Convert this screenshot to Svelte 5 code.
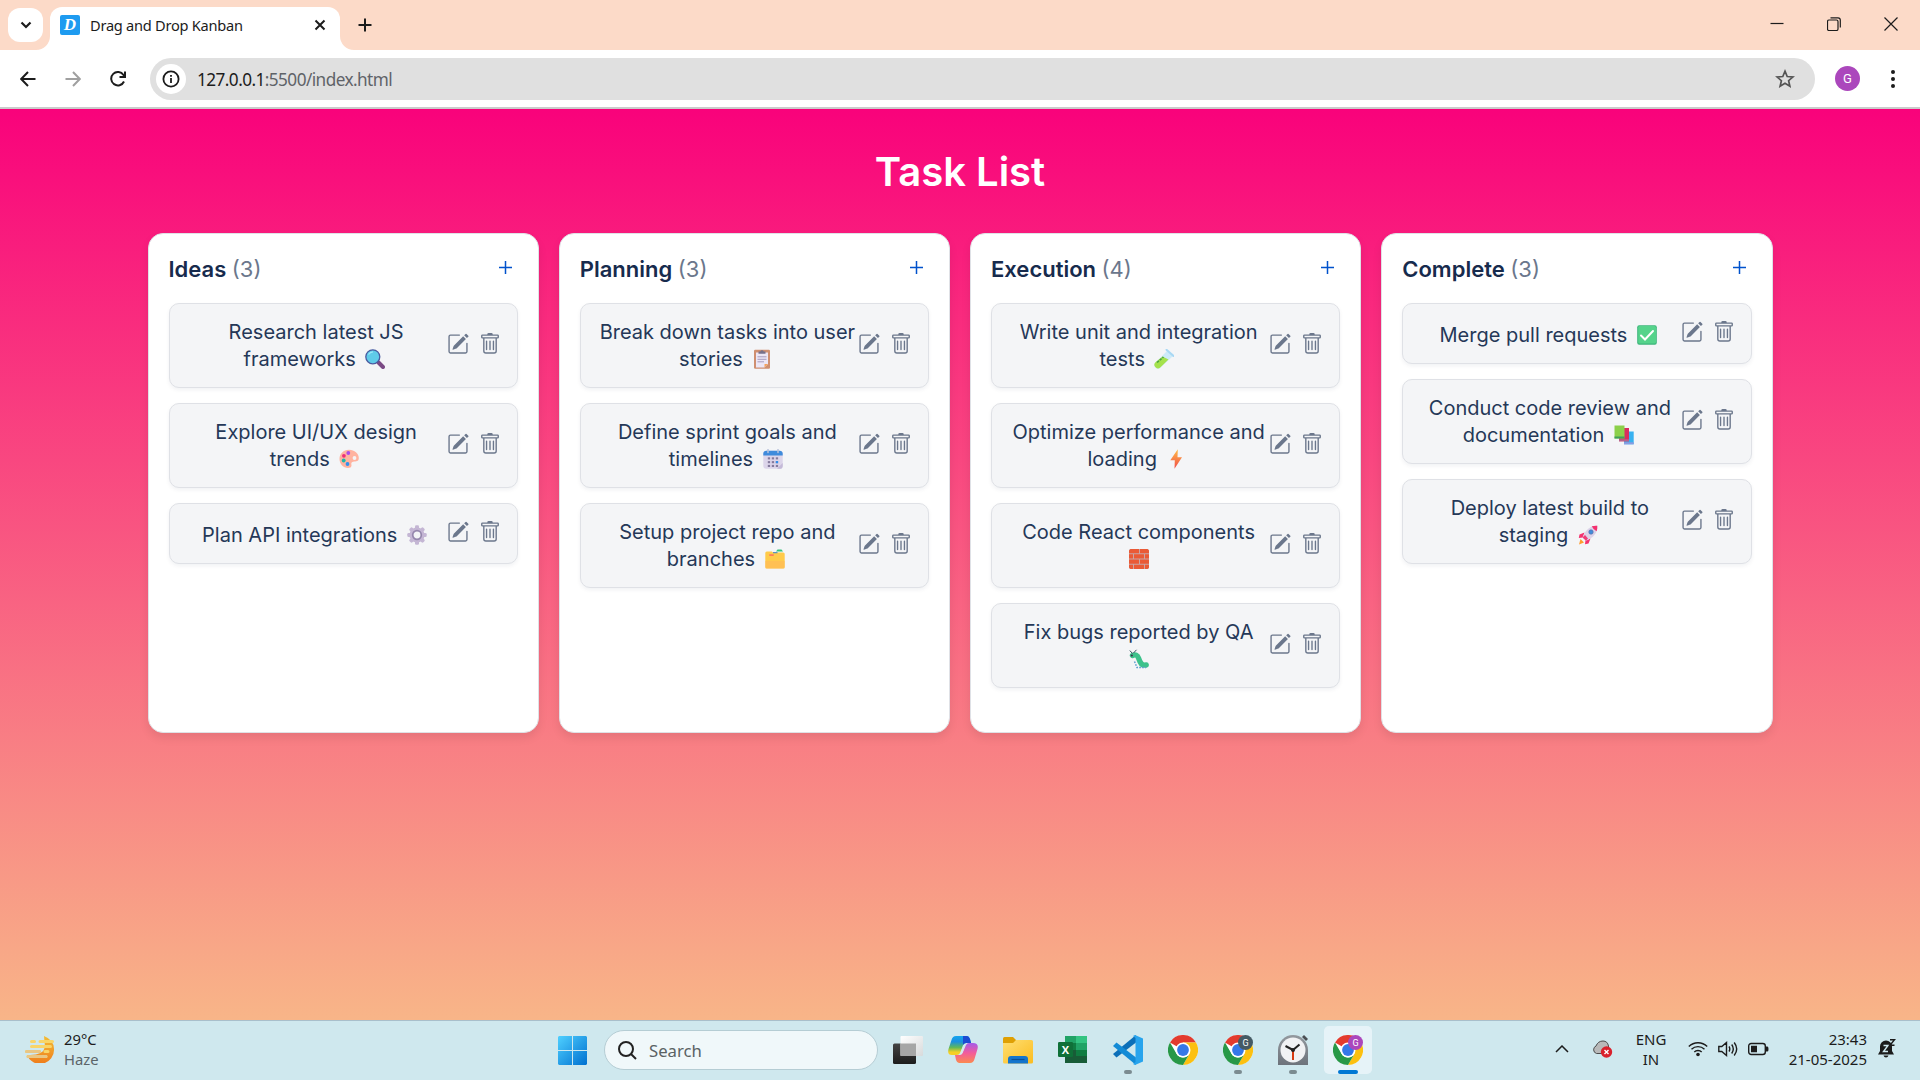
<script>
  const columns = [
    { title: 'Ideas', count: 3, tasks: [
      { lines: ['Research latest JS', 'frameworks'], icon: 'lens' },
      { lines: ['Explore UI/UX design', 'trends'], icon: 'palette' },
      { lines: ['Plan API integrations'], icon: 'gear' }
    ] },
    { title: 'Planning', count: 3, tasks: [
      { lines: ['Break down tasks into user', 'stories'], icon: 'clipboard' },
      { lines: ['Define sprint goals and', 'timelines'], icon: 'calendar' },
      { lines: ['Setup project repo and', 'branches'], icon: 'folder' }
    ] },
    { title: 'Execution', count: 4, tasks: [
      { lines: ['Write unit and integration', 'tests'], icon: 'tube' },
      { lines: ['Optimize performance and', 'loading'], icon: 'bolt' },
      { lines: ['Code React components', ''], icon: 'brick' },
      { lines: ['Fix bugs reported by QA', ''], icon: 'bug' }
    ] },
    { title: 'Complete', count: 3, tasks: [
      { lines: ['Merge pull requests'], icon: 'check' },
      { lines: ['Conduct code review and', 'documentation'], icon: 'books' },
      { lines: ['Deploy latest build to', 'staging'], icon: 'rocket' }
    ] }
  ];
  const dots = [0, 4, 8];
</script>

{#snippet emoji(name)}
  <svg class="emoji" viewBox="0 0 20 20">
    {#if name === 'lens'}
      <path d="M13.5 13.5 L18 18" stroke="#7a4a85" stroke-width="4" stroke-linecap="round" />
      <circle cx="7.8" cy="7.8" r="7" fill="#5fcbe9" stroke="#4a5aa0" stroke-width="1.3" />
      <path d="M3.5 5.5 Q5 3 8 2.8" stroke="#9be6f8" stroke-width="1.2" fill="none" />
    {:else if name === 'palette'}
      <path d="M10 .8C4.500.8.5 4.800.5 10c0 5 4 9 8.500 9 2 0 3.500-.8 3.500-2.500 0-1.500-.8-2.500.8-3.500 2-1 6.500.5 6.500-4C19.800 4.500 15.500.8 10 .8z" fill="#ffb3a0" />
      <circle cx="15.500" cy="9" r="1.900" fill="#f3f4f6" />
      <circle cx="9.300" cy="4" r="1.900" fill="#a94ce8" />
      <circle cx="4.900" cy="6.800" r="1.900" fill="#ec2f78" />
      <circle cx="4.700" cy="11.500" r="1.900" fill="#20b8a8" />
      <circle cx="8.500" cy="15" r="1.900" fill="#3390ee" />
    {:else if name === 'gear'}
      <g fill="#c4b6d4">
        {#each [0, 45, 90, 135] as a}
          <rect x="8" y=".3" width="4" height="19.400" rx="1.300" transform="rotate({a} 10 10)" />
        {/each}
        <circle cx="10" cy="10" r="7.600" />
      </g>
      <circle cx="10" cy="10" r="4.300" fill="#f3f4f6" stroke="#9587ad" stroke-width="1.700" />
    {:else if name === 'clipboard'}
      <rect x="2" y=".8" width="16" height="19" rx="1.200" fill="#cf8f70" />
      <path d="M4 3.500h12v11.500l-3.500 3.500H4z" fill="#ece6f5" />
      <path d="M12.500 18.500V15H16z" fill="#f5a25c" />
      <path d="M6.500 4.800V2.500h1.800a1.800 1.800 0 0 1 3.400 0h1.800v2.300z" fill="#77718a" />
      <path d="M5.500 7.800h9M5.500 10.300h9M5.500 12.800h6.500" stroke="#a79cbd" stroke-width="1" />
    {:else if name === 'calendar'}
      <rect x=".3" y="1.800" width="19.400" height="18" rx="3" fill="#dcd5ea" />
      <path d="M.3 6.500V4.500a3 3 0 0 1 3-2.700h13.400a3 3 0 0 1 3 2.700v2z" fill="#3f8bdc" />
      <path d="M5 .5v3M15 .5v3" stroke="#b9c3dc" stroke-width="1.500" stroke-linecap="round" />
      <g fill="#857b9d">
        {#each dots as x}
          {#each dots as y}
            <rect x={4.800 + x} y={8.300 + y * .95} width="2.300" height="2.100" />
          {/each}
        {/each}
      </g>
      <rect x="12.800" y="12.100" width="2.300" height="2.100" fill="#2b8df0" />
      <path d="M14 19.800 19.700 14v3a2.800 2.800 0 0 1-3 2.800z" fill="#c4bad8" />
    {:else if name === 'folder'}
      <path d="M11 2.500 12.500.6h4L18 2.500z" fill="#35c47f" />
      <path d="M.3 4a1.500 1.500 0 0 1 1.500-1.500h5L8 3.500h10.200A1.500 1.500 0 0 1 19.700 5v13a1.500 1.500 0 0 1-1.500 1.500H1.800A1.500 1.500 0 0 1 .3 18z" fill="#ffcb4a" />
      <path d="M.3 12h19.400v6a1.500 1.500 0 0 1-1.500 1.500H1.800A1.500 1.500 0 0 1 .3 18z" fill="#ffb95a" opacity=".6" />
      <path d="M8 3.200h4.500v1H8z" fill="#357fc5" />
      <rect x="4" y="5.200" width="5" height="1.700" rx=".8" fill="#ff7d5c" />
    {:else if name === 'tube'}
      <path d="M13.500 1.500 19 7 6.500 18.500a3.500 3.500 0 0 1-5-5z" fill="#cdeaf8" />
      <path d="M8.500 7.500 14.500 10.500 6.500 18.300a3.500 3.500 0 0 1-5-5z" fill="#a5e24c" />
      <path d="M12.500.8 19.500 7" stroke="#a8d8f4" stroke-width="2" stroke-linecap="round" />
      <path d="M3 13.500 9.500 8" stroke="#4ba344" stroke-width="1.600" stroke-dasharray="2.500 1" />
    {:else if name === 'bolt'}
      <defs>
        <linearGradient id="boltFill" x2="0" y2="1"><stop offset="0" stop-color="#ffbd45" /><stop offset="1" stop-color="#f04b4a" /></linearGradient>
      </defs>
      <path d="M11.800.3 4.300 11.300h4.500L8.500 19.800 16 8.300h-4.500z" fill="url(#boltFill)" />
    {:else if name === 'brick'}
      <rect width="20" height="20" rx="1.500" fill="#c9a5a5" />
      <g fill="#ea5a36">
        <path d="M1.500 0H10v4.300H0V1.500zM11 0h7.500L20 1.500v2.800h-9zM0 5.300h4v4.200H0zM5 5.300h10v4.200H5zM16 5.300h4v4.200h-4zM0 10.500h10v4.200H0zM11 10.500h9v4.200h-9zM0 15.700h4V20H1.500L0 18.500zM5 15.700h10V20H5zM16 15.700h4v2.800L18.500 20H16z" />
      </g>
    {:else if name === 'bug'}
      <path d="M3.500 6.500Q8 4.500 9.500 9T12.500 15T17.200 16" stroke="#3cc28b" stroke-width="5.400" stroke-linecap="round" fill="none" />
      <path d="M5.500 12.500 8 18.500h9" stroke="#5f9ed0" stroke-width="1.500" stroke-dasharray="1.700 1.200" fill="none" />
      <path d="M3.500 4.500.8 1.500M4.500 4 7.500.8" stroke="#34535e" stroke-width="1" />
      <circle cx="2.800" cy="6.500" r="1.100" fill="#3a3150" />
    {:else if name === 'check'}
      <rect x=".2" y=".2" width="19.600" height="19.600" rx="2" fill="#3cb57b" />
      <rect x="1.200" y="1" width="17.800" height="17.500" rx="1.500" fill="#55d38b" />
      <path d="M4 10.500 8 14.500 16 6" stroke="#fff" stroke-width="2" stroke-linecap="round" fill="none" />
    {:else if name === 'books'}
      <path d="M10 6.500h9.700v12.800H10z" fill="#38b1f0" />
      <path d="M10 17.300h9.700v2H10z" fill="#8d9be0" />
      <path d="M5 3h10v13.300H5z" fill="#d92c5f" />
      <path d="M5 14.300h10v2H5z" fill="#b5648c" />
      <path d="M.5.500h10v13h-10z" fill="#8cd04a" />
      <path d="M.5 11.500h10v2h-10z" fill="#3f9e5b" />
    {:else}
      <path d="M6.500 7.500 1.500 9.500.8 13l4-.5zM12.500 13.500l-2 5L7 19.200l.5-4z" fill="#f4316f" />
      <path d="M1 19.500 2.500 14l3.500 3.500z" fill="#ff9c2e" />
      <path d="M19.300.7C13 .5 8 3.500 4.500 12.500L8 15.800C16 12.500 19.500 7.500 19.300.7z" fill="#dcd3e9" />
      <path d="M19.300.7q-3-.3-5.500.6 1.500 3.500 4.800 5 .9-2.300.7-5.600z" fill="#f4316f" />
      <path d="M4.500 12.500 8 15.800 10 13.500 7 10z" fill="#ef3d78" />
      <circle cx="13" cy="7" r="2.200" fill="#3f8cdc" stroke="#5b6ea8" stroke-width=".7" />
    {/if}
  </svg>
{/snippet}

{#snippet chrome(letter, color)}
  <svg class="app" viewBox="0 0 30 30">
    <circle cx="15" cy="15" r="15" fill="#fff" />
    <path d="M15 15 2 7.500A15 15 0 0 1 28 7.500H15z" fill="#e33b2e" />
    <path d="M15 7.500H28A15 15 0 0 1 15 30l6.500-11.200z" fill="#fcc011" />
    <path d="M2 7.500A15 15 0 0 0 15 30l6.500-11.200A7.500 7.500 0 0 1 8.500 18.800z" fill="#279847" />
    <circle cx="15" cy="15" r="7.500" fill="#fff" />
    <circle cx="15" cy="15" r="5.900" fill="#3578e8" />
    {#if letter}
      <circle cx="22.500" cy="7.500" r="7.500" fill={color} />
      <text x="22.500" y="10.700" class="badge-letter">{letter}</text>
    {/if}
  </svg>
{/snippet}

<div class="screen">
  <header class="tabs">
    <button class="tab-list" aria-label="Search tabs">
      <svg width="12" height="8" viewBox="0 0 12 8"><path d="M1.500 1.500 6 6l4.500-4.500" /></svg>
    </button>
    <div class="tab">
      <svg class="foot left" width="14" height="14" viewBox="0 0 14 14"><path d="M14 0v14H0A14 14 0 0 0 14 0z" /></svg>
      <span class="favicon">D</span>
      <span class="tab-title">Drag and Drop Kanban</span>
      <svg class="tab-close" width="12" height="12" viewBox="0 0 12 12"><path d="m1.500 1.500 9 9m0-9-9 9" /></svg>
      <svg class="foot right" width="14" height="14" viewBox="0 0 14 14"><path d="M0 0v14h14A14 14 0 0 1 0 0z" /></svg>
    </div>
    <svg class="new-tab" width="14" height="14" viewBox="0 0 14 14"><path d="M7 .5v13M.5 7h13" /></svg>
    <div class="window-controls">
      <svg width="14" height="14" viewBox="0 0 14 14"><path d="M.5 6.500h13" /></svg>
      <svg width="14" height="14" viewBox="0 0 14 14"><rect x=".5" y="3" width="10.500" height="10.500" rx="1.500" /><path d="M3.500.8h7.500a2.300 2.300 0 0 1 2.300 2.300v7.500" /></svg>
      <svg width="14" height="14" viewBox="0 0 14 14"><path d="m.5.500 13 13m0-13-13 13" /></svg>
    </div>
  </header>

  <nav class="toolbar">
    <svg class="nav" width="16" height="16" viewBox="0 0 16 16"><path d="M15.500 8H1.500M8 1 1.200 8 8 15" /></svg>
    <svg class="nav faded" width="16" height="16" viewBox="0 0 16 16"><path d="M.5 8h14M8 1l6.800 7L8 15" /></svg>
    <svg class="nav" width="16" height="16" viewBox="0 0 16 16"><path d="M14 10.500A6.700 6.700 0 1 1 13.500 4L15 6M15 .5V6H9.500" /></svg>
    <div class="address">
      <span class="site-info">
        <svg width="18" height="18" viewBox="0 0 18 18"><circle cx="9" cy="9" r="7.600" /><path d="M9 8v5M9 5v1.800" /></svg>
      </span>
      <span class="url">127.0.0.1<span>:5500/index.html</span></span>
      <svg class="star" width="20" height="20" viewBox="0 0 20 20"><path d="m10 2.200 2.200 5.300 5.700.5-4.300 3.700 1.300 5.600-4.900-3-4.900 3 1.300-5.600L2.100 8l5.700-.5z" /></svg>
    </div>
    <span class="avatar">G</span>
    <svg class="more" width="6" height="20" viewBox="0 0 6 20"><circle cx="3" cy="3" r="2" /><circle cx="3" cy="10" r="2" /><circle cx="3" cy="17" r="2" /></svg>
  </nav>

  <main>
    <h1>Task List</h1>
    <div class="board">
      {#each columns as column}
        <section class="column">
          <header class="column-head">
            <h2>{column.title} <span>({column.count})</span></h2>
            <svg class="add" width="13" height="13" viewBox="0 0 13 13"><path d="M6.500 0v13M0 6.500h13" /></svg>
          </header>
          {#each column.tasks as task}
            <article class="card" class:single={task.lines.length === 1}>
              <p>
                {#each task.lines as line, i}
                  <span class="line">{line}{#if i === task.lines.length - 1}{#if line}<span class="space"></span>{/if}{@render emoji(task.icon)}{/if}</span>
                {/each}
              </p>
              <div class="actions">
                <svg width="22" height="22" viewBox="0 0 16 16"><path d="M15.502 1.940a.5.5 0 0 1 0 .706L14.459 3.690l-2-2L13.502.646a.5.5 0 0 1 .707 0l1.293 1.293zm-1.750 2.456-2-2L4.939 9.210a.5.5 0 0 0-.121.196l-.805 2.414a.25.25 0 0 0 .316.316l2.414-.805a.5.5 0 0 0 .196-.12l6.813-6.814z" /><path fill-rule="evenodd" d="M1 13.500A1.500 1.500 0 0 0 2.500 15h11a1.500 1.500 0 0 0 1.500-1.500v-6a.5.5 0 0 0-1 0v6a.5.5 0 0 1-.5.5h-11a.5.5 0 0 1-.5-.5v-11a.5.5 0 0 1 .5-.5H9a.5.5 0 0 0 0-1H2.500A1.500 1.500 0 0 0 1 2.500z" /></svg>
                <svg width="22" height="22" viewBox="0 0 16 16"><path d="M5.500 5.500A.5.500 0 0 1 6 6v6a.5.500 0 0 1-1 0V6a.5.500 0 0 1 .5-.5m2.500 0a.5.500 0 0 1 .5.500v6a.5.500 0 0 1-1 0V6a.5.500 0 0 1 .5-.5m3 .5a.5.500 0 0 0-1 0v6a.5.500 0 0 0 1 0z" /><path d="M14.500 3a1 1 0 0 1-1 1H13v9a2 2 0 0 1-2 2H5a2 2 0 0 1-2-2V4h-.5a1 1 0 0 1-1-1V2a1 1 0 0 1 1-1H6a1 1 0 0 1 1-1h2a1 1 0 0 1 1 1h3.500a1 1 0 0 1 1 1zM4.118 4 4 4.059V13a1 1 0 0 0 1 1h6a1 1 0 0 0 1-1V4.059L11.882 4zM2.500 3h11V2h-11z" /></svg>
              </div>
            </article>
          {/each}
        </section>
      {/each}
    </div>
  </main>

  <footer class="taskbar">
    <div class="weather">
      <svg width="30" height="27" viewBox="0 0 30 27">
        <defs><linearGradient id="sun" x2="0" y2="1"><stop offset="0" stop-color="#f3bd35" /><stop offset="1" stop-color="#ef7d1c" /></linearGradient></defs>
        <path d="M19 0q10 4 10 13a14 14 0 0 1-27 6q16 1 18-8Z" fill="url(#sun)" />
        <path d="M6.500 5.500h3M15 5.500h12.500M6.500 10.500h19M1.500 15.500h13M20 15.500h3M3 20.500h18" stroke="#f9d568" stroke-width="3" stroke-linecap="round" />
        <path d="M1.500 15.500h13M3 20.500h18" stroke="#e9c684" stroke-width="3" stroke-linecap="round" />
      </svg>
      <div><span>29°C</span><span class="muted">Haze</span></div>
    </div>

    <div class="apps">
      <svg class="start" width="29" height="29" viewBox="0 0 29 29">
        <defs><linearGradient id="win" gradientUnits="userSpaceOnUse" x2="29" y2="29"><stop offset="0" stop-color="#4fd0ff" /><stop offset="1" stop-color="#0070d0" /></linearGradient></defs>
        <path d="M1 0h13v14H0V1zM15 0h13l1 1v13H15zM0 15h14v14H1l-1-1zM15 15h14v13l-1 1H15z" fill="url(#win)" />
      </svg>
      <div class="search">
        <svg width="19" height="19" viewBox="0 0 19 19"><circle cx="8" cy="8" r="7" /><path d="m13 13 5 5" /></svg>
        <span>Search</span>
      </div>
      <div class="slot">
        <svg class="app" viewBox="0 0 30 30">
          <defs>
            <linearGradient id="dark" x2="0" y2="1"><stop offset="0" stop-color="#444" /><stop offset="1" stop-color="#1c1c1c" /></linearGradient>
            <linearGradient id="light" x2="1" y2="1"><stop offset="0" stop-color="#fff" /><stop offset="1" stop-color="#d8dadb" /></linearGradient>
          </defs>
          <rect x="0" y="8.500" width="23" height="20.500" rx="1.500" fill="url(#dark)" />
          <rect x="7.500" y="1" width="22.500" height="20" rx="1" fill="url(#light)" />
          <path d="M7.500 8.500H23V21H7.500z" fill="#a6a6a6" />
        </svg>
      </div>
      <div class="slot">
        <svg class="app" viewBox="0 0 30 30">
          <defs>
            <linearGradient id="cpA" x2="0" y2="1"><stop offset="0" stop-color="#15a5ee" /><stop offset=".3" stop-color="#1b8fe0" /><stop offset=".6" stop-color="#5fb85a" /><stop offset=".85" stop-color="#f5cf25" /></linearGradient>
            <linearGradient id="cpB" x2="0" y2="1"><stop offset="0" stop-color="#a45bea" /><stop offset=".5" stop-color="#f35c9b" /><stop offset="1" stop-color="#fb8a50" /></linearGradient>
          </defs>
          <path d="M22 28H11q-2 0-3-3l-1-5h5q2 0 3-3l3-7q1-2 3-2h4q6 0 4.500 6L26.500 24q-1 4-4.500 4z" fill="url(#cpB)" />
          <path d="M8 1h11q2 0 3 3l1 4h-5q-2 0-3 3l-3 7q-1 2-3 2H4q-5 0-3.500-6L3.500 5Q4.500 1 8 1z" fill="url(#cpA)" />
          <path d="M15 1h4q2 0 3 3l1 4h-5q-2 0-3 2z" fill="#1b4bd2" />
          <path d="M15 10.500q.500-1.500 2.500-1.500l-3 9q-.500 1.500-2.500 1.500z" fill="#d7e9ee" />
        </svg>
      </div>
      <div class="slot">
        <svg class="app" viewBox="0 0 30 30">
          <defs><linearGradient id="fold" x2="1" y2="1"><stop offset="0" stop-color="#ffdf73" /><stop offset="1" stop-color="#fbbc1f" /></linearGradient></defs>
          <path d="M0 3.500Q0 2 1.500 2H10l3 3v6H0z" fill="#dfa004" />
          <path d="M0 8h10l3-3h15.500Q30 5 30 6.500V27q0 1.500-1.500 1.500h-27Q0 28.500 0 27z" fill="url(#fold)" />
          <path d="M5 28.500V24q0-3 3-3h14q3 0 3 3v4.500z" fill="#1475cc" /><path d="M8.500 24.500h13" stroke="#0a4f95" stroke-width="1.200" />
        </svg>
      </div>
      <div class="slot">
        <svg class="app" viewBox="0 0 30 30">
          <path d="M7 1h22v27H7z" fill="#21a366" /><path d="M18 1h11v7H18z" fill="#33c481" /><path d="M7 8h11v7H7z" fill="#107c41" /><path d="M7 15h11v13H7z" fill="#185c37" /><path d="M18 15h11v6H18z" fill="#107c41" /><path d="M18 21h11v7H18z" fill="#185c37" />
          <rect x="0" y="7" width="15" height="15" rx="1.200" fill="#0f7038" />
          <text x="7.500" y="18.500" class="excel-letter">X</text>
        </svg>
      </div>
      <div class="slot">
        <svg class="app" viewBox="0 0 30 30">
          <path d="m0 19 3.500 3.500L23 7.500V0z" fill="#0c6fb8" /><path d="M0 11 3.500 7.500 23 22.500V30z" fill="#138bd6" />
          <path d="m22 0 8 3.500v23L22 30l-2-1 2.500-2V3L20 1z" fill="#28a4ed" />
        </svg>
        <i class="running"></i>
      </div>
      <div class="slot">{@render chrome('', '')}</div>
      <div class="slot">{@render chrome('G', '#455a64')}<i class="running"></i></div>
      <div class="slot">
        <svg class="app" viewBox="0 0 30 30">
          <defs><linearGradient id="clockBody" x2="0" y2="1"><stop offset="0" stop-color="#93999f" /><stop offset="1" stop-color="#6d737b" /></linearGradient></defs>
          <path d="m24 2 2-2 4 4-2 2z" fill="#4b4f54" />
          <path d="M0 30V15a15 15 0 0 1 30 0v15z" fill="url(#clockBody)" />
          <circle cx="15" cy="15" r="12.500" fill="#f1f2f4" />
          <path d="M15 15v10" stroke="#d83b12" stroke-width="2" /><path d="M7.500 11 15 15l6.500-5.500" stroke="#222" stroke-width="2" fill="none" /><circle cx="15" cy="15" r="2" fill="#222" />
        </svg>
        <i class="running"></i>
      </div>
      <div class="slot active">{@render chrome('G', '#ab47bc')}<i class="running"></i></div>
    </div>

    <div class="tray">
      <svg class="caret" width="14" height="8" viewBox="0 0 14 8"><path d="m1 7 6-6 6 6" /></svg>
      <svg class="cloud" width="21" height="18" viewBox="0 0 21 18">
        <path d="M4.500 13.500a4 4 0 0 1-.5-7.500Q6 1 11 1q4.500 0 5.500 5v7.500z" fill="#b9b9b9" stroke="#4c4c4c" />
        <circle cx="14.500" cy="12" r="5.700" fill="#d9212c" /><path d="m12.500 10 4 4m0-4-4 4" stroke="#fff" stroke-width="1.400" />
      </svg>
      <div class="lang"><span>ENG</span><span>IN</span></div>
      <svg class="wifi" width="20" height="16" viewBox="0 0 20 16"><path d="M.8 5.500a13 13 0 0 1 18.400 0M3.500 8.300a9.200 9.200 0 0 1 13 0M6.300 11a5.200 5.200 0 0 1 7.400 0" /><circle cx="10" cy="13.500" r="1.800" /></svg>
      <svg class="sound" width="20" height="16" viewBox="0 0 20 16"><path d="M.8 5.500h3L8.500 1.500v13l-4.700-4h-3zM11 5.500q1.600 2.500 0 5M13.700 3.500q3.200 4.500 0 9M16.200 1.500q5 6.500 0 13" /></svg>
      <svg class="battery" width="21" height="14" viewBox="0 0 21 14"><rect x=".7" y="1.500" width="16.600" height="11" rx="2.500" /><path class="fill" d="M3 3.700h6v6.600H3zM18 4.500h1.500q1 0 1 2.500t-1 2.500H18z" /></svg>
      <div class="clock"><span>23:43</span><span>21-05-2025</span></div>
      <svg class="bell" width="18" height="20" viewBox="0 0 18 20"><path d="M8 1.500A6 6 0 0 0 2 7.500V12L0 15.500h16L14 12V7.500A6 6 0 0 0 8 1.500zM5.500 16.500a2.600 2.600 0 0 0 5 0z" fill="#1b1b1b" /><path d="M5.500 6.500H10l-4.500 6H10" stroke="#cfe8ee" stroke-width="1.400" fill="none" /><path d="M12 .8h4.500L12 6.300h4.500" stroke="#1b1b1b" stroke-width="1.400" fill="none" /></svg>
    </div>
  </footer>
</div>

<style>
  :global(body) { margin: 0; }
  .screen { display: flex; flex-direction: column; width: 1920px; height: 1080px; overflow: hidden; font-family: "Noto Sans", sans-serif; color: #1c1c1c; }
  svg { display: block; flex: none; fill: none; }
  h1, h2, p { margin: 0; font-weight: 400; }

  .tabs { display: flex; box-sizing: border-box; height: 50px; padding-left: 8px; background: #fcdac8; flex: none; }
  .tab-list { display: grid; place-items: center; width: 35px; height: 34px; margin-top: 8px; padding: 0; border: 0; border-radius: 12px; background: #fff; }
  .tab-list path { stroke: #1c1c1c; stroke-width: 2.200; }
  .tab { position: relative; display: flex; align-items: center; box-sizing: border-box; width: 290px; margin: 7px 0 0 7px; padding: 0 14px 7px 10px; border-radius: 12px 12px 0 0; background: #fff; }
  .foot { position: absolute; bottom: 0; fill: #fff; }
  .left { left: -14px; }
  .right { right: -14px; }
  .favicon { display: grid; place-items: center; width: 20px; height: 20px; border-radius: 2px; background: #1e9bf0; color: #fff; font: italic 700 17px/20px "Liberation Serif", serif; }
  .tab-title { margin-left: 10px; font-size: 14.600px; letter-spacing: -.25px; white-space: nowrap; }
  .tab-close { margin-left: auto; stroke: #1c1c1c; stroke-width: 2; }
  .new-tab { margin: 18px 0 0 18px; stroke: #1c1c1c; stroke-width: 2; }
  .window-controls { display: flex; gap: 43px; margin: 17px 22px 0 auto; }
  .window-controls svg { stroke: #1c1c1c; stroke-width: 1.200; }

  .toolbar { display: flex; align-items: center; box-sizing: border-box; height: 59px; padding: 0 24px 0 20px; border-bottom: 2px solid #cbcbcb; background: #fff; flex: none; }
  .nav { margin-right: 29px; stroke: #1c1c1c; stroke-width: 2; }
  .faded { stroke: #a0a0a0; }
  .address { display: flex; align-items: center; box-sizing: border-box; width: 1665px; height: 42px; margin: 1px 0 0 -5px; padding: 0 20px 0 6px; border-radius: 21px; background: #e0e0e0; }
  .site-info { display: grid; place-items: center; width: 30px; height: 30px; border-radius: 50%; background: #fff; }
  .site-info svg { stroke: #1c1c1c; stroke-width: 1.800; }
  .url { margin-left: 11px; font-size: 17.200px; letter-spacing: -.56px; color: #1c1c1c; }
  .url span { color: #5f6368; }
  .star { margin-left: auto; stroke: #555; stroke-width: 1.700; }
  .avatar { display: grid; place-items: center; width: 25px; height: 25px; margin-left: 20px; border-radius: 50%; background: #ab47bc; color: #fff; font: 13px Roboto, sans-serif; }
  .more { margin-left: auto; fill: #1c1c1c; }

  main { flex: 1; box-sizing: border-box; padding: 33px 0 0 147.500px; background: linear-gradient(#f9027b, #f8b588); font-family: Inter, sans-serif; }
  h1 { width: 1625px; height: 91px; color: #fff; font-size: 40px; font-weight: 600; line-height: 60px; text-align: center; }
  .board { display: grid; grid-template-columns: repeat(4, 1fr); gap: 20px; width: 1625px; }
  .column { box-sizing: border-box; height: 500px; padding: 20px; border: 1px solid #dfe1e6; border-radius: 15px; background: #fff; box-shadow: 0 5px 10px rgba(0, 0, 0, .08); }
  .column-head { display: flex; justify-content: space-between; height: 49px; padding-right: 6px; }
  h2 { color: #172b4d; font-size: 22px; font-weight: 600; line-height: 30px; }
  h2 span { color: #6b778c; font-weight: 400; }
  .add { margin-top: 7px; stroke: #0052cc; stroke-width: 1.500; }
  .card { display: flex; align-items: center; box-sizing: border-box; height: 85px; margin-bottom: 15px; padding: 0 16px; border: 1px solid #dfe1e6; border-radius: 10px; background: #f4f5f7; box-shadow: 0 2px 4px rgba(9, 30, 66, .06); }
  .card p { flex: 1; min-width: 0; color: #253858; font-size: 20px; line-height: 27px; text-align: center; white-space: nowrap; }
  .line { display: block; height: 27px; }
  .space { display: inline-block; width: 6px; }
  .emoji { display: inline-block; width: 20px; height: 20px; margin: 0 3.400px; vertical-align: -3px; }
  .actions { display: flex; gap: 10px; margin-top: -3px; }
  .actions svg { fill: #6b778c; }
  .single { height: 61px; }
  .single p { padding-top: 3px; }

  .taskbar { display: flex; box-sizing: border-box; height: 60px; border-top: 1px solid #a9bfcb; background: #cfe8ee; flex: none; }
  .weather { display: flex; width: 558px; padding: 15px 0 0 25px; box-sizing: border-box; font-size: 14.800px; line-height: 20px; }
  .weather div { display: flex; flex-direction: column; margin: -7px 0 0 9px; }
  .muted { color: #5b6468; }
  .apps { display: flex; align-items: center; padding-bottom: 1px; }
  .start { margin-right: 17px; }
  .search { display: flex; align-items: center; gap: 12px; box-sizing: border-box; width: 274px; height: 40px; margin-right: 6px; padding-left: 13px; border: 1px solid #b5cdd4; border-radius: 20px; background: #f0f8fa; color: #5a6264; font-size: 16.700px; }
  .search svg { stroke: #222; stroke-width: 2; }
  .slot { position: relative; display: grid; place-items: center; box-sizing: border-box; width: 48px; height: 48px; margin-right: 7px; border-radius: 5px; }
  .active { background: #e6f3f8; }
  .app { width: 30px; height: 30px; }
  .running { position: absolute; bottom: 0; width: 8px; height: 4px; border-radius: 2px; background: #7b8b90; }
  .active .running { width: 20px; background: #0078d4; }
  .badge-letter { fill: #fff; font: 9px Roboto, sans-serif; text-anchor: middle; }
  .excel-letter { fill: #fff; font: 700 11px "Open Sans", sans-serif; text-anchor: middle; }
  .tray { display: flex; align-items: center; margin-left: auto; padding: 0 24px 3px 0; font-size: 15px; line-height: 20px; }
  .tray > div { display: flex; flex-direction: column; }
  .caret { margin-right: 23px; stroke: #1c1c1c; stroke-width: 1.500; }
  .cloud { margin-right: 23px; }
  .lang { align-items: center; width: 30px; margin-right: 22px; }
  .wifi, .sound, .battery { margin-right: 10px; stroke: #1c1c1c; stroke-width: 1.400; }
  .wifi circle, .fill { fill: #1c1c1c; stroke: none; }
  .clock { align-items: flex-end; width: 88px; margin-right: 11px; }
</style>
